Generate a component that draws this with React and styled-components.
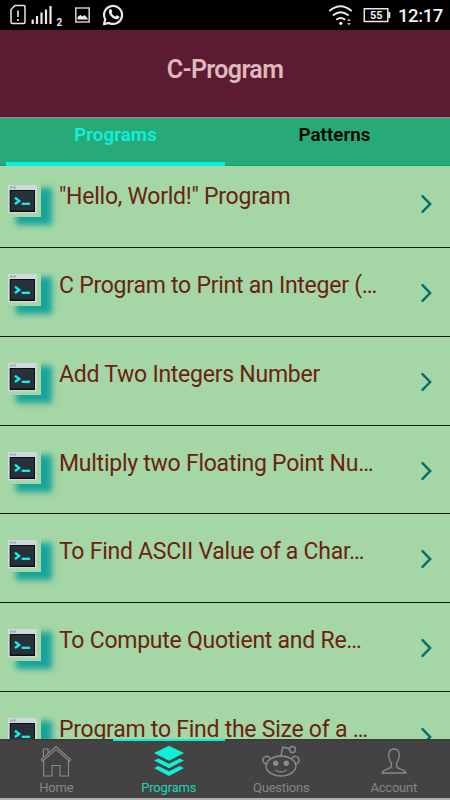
import React from "react";
import styled, { createGlobalStyle } from "styled-components";

const GlobalStyle = createGlobalStyle`
  * {
    box-sizing: border-box;
  }
  body {
    margin: 0;
    overflow: hidden;
    font-family: Roboto, sans-serif;
  }
`;

const Screen = styled.div`
  display: flex;
  flex-direction: column;
  width: 450px;
  height: 800px;
  overflow: hidden;
  background: #a5d6a5;
`;

const StatusBar = styled.div`
  display: flex;
  flex: none;
  align-items: center;
  justify-content: space-between;
  height: 30px;
  background: #000;
`;

const Clock = styled.span`
  width: 45px;
  color: #f2f2f2;
  font-size: 18.5px;
  font-weight: 500;
  line-height: 32px;
  letter-spacing: -0.4px;
  white-space: nowrap;
`;

const StatusEnd = styled.div`
  display: flex;
  height: 30px;
  padding-right: 7px;
`;

const Header = styled.header`
  display: flex;
  flex: none;
  align-items: center;
  justify-content: center;
  height: 88px;
  padding-bottom: 8px;
  border-bottom: 1px solid #a08a86;
  background: #5d1b33;
`;

const Title = styled.h1`
  margin: 0;
  color: #dfb9b9;
  font-size: 25px;
  font-weight: 600;
  line-height: 28px;
  letter-spacing: -0.65px;
`;

const Tabs = styled.div`
  display: flex;
  flex: none;
  height: 48px;
  padding: 0 6px;
  background: #28aa78;
  box-shadow: inset 0 -1px #08a77b;
`;

const Tab = styled.div`
  flex: 1;
  height: 48px;
  padding-top: 6px;
  border-bottom: 4px solid ${props => (props.$active ? "#04f2da" : "transparent")};
  color: ${props => (props.$active ? "#10f0dc" : "#000")};
  font-size: 18.7px;
  font-weight: 600;
  line-height: 22px;
  letter-spacing: 0.1px;
  text-align: center;
`;

const List = styled.div`
  flex: 1;
  min-height: 0;
  overflow: hidden;
`;

const Row = styled.div`
  display: flex;
  height: 88.8px;
  padding: 14px 15px 0 5px;
  border-bottom: 1px solid #0b180b;
  &:first-child {
    height: 82px;
  }
  &:not(:first-child) {
    padding-top: 21px;
  }
`;

const Thumb = styled.div`
  flex: none;
  width: 36px;
  height: 37px;
  padding: 5px 0 0 3px;
  box-shadow: 11px 8px 6px #16a49c;
  svg {
    display: block;
  }
`;

const RowText = styled.div`
  flex: 1;
  padding: 3px 0 0 18px;
  color: #6a2310;
  font-size: 23px;
  line-height: 28px;
  letter-spacing: -0.25px;
  white-space: nowrap;
`;

const Arrow = styled.div`
  flex: none;
  width: 16px;
  padding-top: 14px;
`;

const BottomNav = styled.nav`
  display: flex;
  flex: none;
  height: 61px;
  border-bottom: 2px solid #b4b0b2;
  background: #434343;
`;

const NavItem = styled.div`
  display: flex;
  flex: 1;
  flex-direction: column;
  align-items: center;
  height: 59px;
  border-top: 2px solid ${props => (props.$active ? "#04f2da" : "#3b3f3b")};
  color: ${props => (props.$active ? "#10f0d8" : "#8b8b8b")};
  svg {
    margin-top: 3px;
  }
`;

const NavLabel = styled.span`
  margin-top: 2px;
  color: ${props => (props.$active ? "#1fd3be" : "#858585")};
  font-size: 13px;
  line-height: 16px;
  letter-spacing: -0.2px;
`;

const PROGRAMS = [
  '"Hello, World!" Program',
  "C Program to Print an Integer (…",
  "Add Two Integers Number",
  "Multiply two Floating Point Nu…",
  "To Find ASCII Value of a Char…",
  "To Compute Quotient and Re…",
  "Program to Find the Size of a …"
];

const StatusIcons = () => (
  <svg width="150" height="30" fill="none" stroke="#e8e8e8">
    <path d="M15 5.5h9q1 0 1 1v15.500q0 1.500-1.500 1.500h-11q-1.500 0-1.500-1.500V9.500z" strokeWidth="1.500" />
    <path d="M18 10.500v6.500M18 19v2" strokeWidth="1.600" />
    <path d="M32.700 19.500v4.500M37 16v8M41.500 12.500v11.500M46 9.500v14.500M50.500 6v18" strokeWidth="2.200" />
    <text x="56.500" y="25.500" fill="#e8e8e8" stroke="none" fontSize="10" fontWeight="700">2</text>
    <path d="M75.800 8h13.400v14H75.800z" strokeWidth="1.600" stroke="#c8c8c8" />
    <path d="M77.500 19.500v-2.500l3-2 2 1.500 2-1.500 3.200 3.500v1z" fill="#eee" stroke="none" />
    <path d="M104 24.300l1.200-5a9 9 0 1 1 3.700 3.600z" strokeWidth="2.200" strokeLinejoin="round" />
    <path d="M109.300 9.600c1-1 2-.7 2.400.3l.6 1.500c.2.600-.8 1.300-.7 1.800 1 1.600 2.300 2.600 3.800 3.200.5 0 1.200-1.300 1.700-1.100l2 1c.8.500-.2 2.500-1.500 2.900-3.500 1-10.500-4.500-8.300-9.600z" fill="#eee" stroke="none" />
  </svg>
);

const WifiBattery = () => (
  <svg width="74" height="30" fill="none" stroke="#e8e8e8">
    <g strokeWidth="2" strokeLinecap="round">
      <path d="M6 10.500q10.500-8.500 21 0M9.500 15q7.200-5.500 14.500 0M13 19.300q3.800-2.800 7.500 0" />
    </g>
    <circle cx="16.800" cy="23.300" r="1.600" fill="#eee" stroke="none" />
    <path d="M25 18.500l2 2.500h-4zM25 25.500l-2-2.500h4z" fill="#aaa" stroke="none" />
    <path d="M40.300 8.800h23.500v12.700H40.300z" strokeWidth="1.500" />
    <path d="M65.300 12v6" strokeWidth="2" />
    <text x="52.300" y="19.200" fill="#eee" stroke="none" fontSize="11" fontWeight="700" textAnchor="middle">55</text>
  </svg>
);

const TerminalIcon = () => (
  <svg width="29" height="29">
    <path d="M0 0h28.700v28.300H0z" fill="#cfd8dc" />
    <path d="M1.700 5h25.300v22H1.700z" fill="#080e12" />
    <path d="M2.700 6h23.300v19.500H2.700z" fill="#263238" />
    <path d="M2.300 2.600h2.200M5.500 2.600h2.200" stroke="#90a4ae" strokeWidth="2" />
    <path d="M7 12.800l4.200 3.100-4.200 3.100" fill="none" stroke="#18f0ee" strokeWidth="2.300" />
    <path d="M13.700 18.800h8.300" stroke="#18f0ee" strokeWidth="2.300" />
  </svg>
);

const ChevronIcon = () => (
  <svg width="16" height="20" fill="none" stroke="#04706f" strokeWidth="2.500">
    <path d="M3.500 2.200l7.600 7.800-7.600 7.800" strokeLinecap="round" />
  </svg>
);

const HomeIcon = () => (
  <svg width="32" height="34" fill="none" stroke="currentColor" strokeWidth="1.100">
    <path d="M3.600 16.500V32h8.500V21.500h7.900V32h8.500V16.500" />
    <path d="M1.300 15.600L16 2.600l14.700 13-1.300 1.500L16 5.400 2.600 17.100z" />
    <path d="M3.400 13.500V5h4.700v4.500" />
  </svg>
);

const LayersIcon = () => (
  <svg width="32" height="34" fill="currentColor">
    <path d="M16 1.800l15 7.200-15 7.800L1 9zM5.300 14.500L16 19.800l10.700-5.300 4.300 2L16 24.200 1 16.500zM5.300 22L16 27.200 26.700 22l4.300 2L16 32 1 24z" />
  </svg>
);

const RedditIcon = () => (
  <svg width="38" height="34" fill="none" stroke="currentColor" strokeWidth="1.400">
    <ellipse cx="19" cy="22" rx="14.900" ry="10" />
    <path d="M5.300 20A3.800 3.800 0 1 1 8.200 14.500M32.700 20a3.800 3.800 0 1 0-2.900-5.500" />
    <path d="M19 12l1.800-8.800 6.800 1.500" />
    <circle cx="30.500" cy="5.500" r="3" />
    <path d="M13.500 26q5.500 4 11 0" />
    <circle cx="13.700" cy="19.300" r="2.700" fill="currentColor" stroke="none" />
    <circle cx="24.300" cy="19.300" r="2.700" fill="currentColor" stroke="none" />
  </svg>
);

const AccountIcon = () => (
  <svg width="32" height="34" fill="none" stroke="currentColor" strokeWidth="1.300">
    <path d="M16 5c-4.300 0-5.800 3-5.200 7.500.3 3.500 1.200 5 2.600 6.600v3.400c0 2.800-9 2.300-9.300 6.500h23.800c-.3-4.200-9.300-3.700-9.300-6.500v-3.400c1.400-1.600 2.300-3.100 2.600-6.600C21.800 8 20.300 5 16 5z" />
  </svg>
);

const NAV = [
  { label: "Home", icon: HomeIcon },
  { label: "Programs", icon: LayersIcon, active: true },
  { label: "Questions", icon: RedditIcon },
  { label: "Account", icon: AccountIcon }
];

const App = () => {
  return (
    <Screen>
      <GlobalStyle />
      <StatusBar>
        <StatusIcons />
        <StatusEnd>
          <WifiBattery />
          <Clock>12:17</Clock>
        </StatusEnd>
      </StatusBar>
      <Header>
        <Title>C-Program</Title>
      </Header>
      <Tabs>
        <Tab $active>Programs</Tab>
        <Tab>Patterns</Tab>
      </Tabs>
      <List>
        {PROGRAMS.map(name => (
          <Row key={name}>
            <Thumb>
              <TerminalIcon />
            </Thumb>
            <RowText>{name}</RowText>
            <Arrow>
              <ChevronIcon />
            </Arrow>
          </Row>
        ))}
      </List>
      <BottomNav>
        {NAV.map(({ label, icon: Icon, active }) => (
          <NavItem key={label} $active={active}>
            <Icon />
            <NavLabel $active={active}>{label}</NavLabel>
          </NavItem>
        ))}
      </BottomNav>
    </Screen>
  );
};

export default App;
